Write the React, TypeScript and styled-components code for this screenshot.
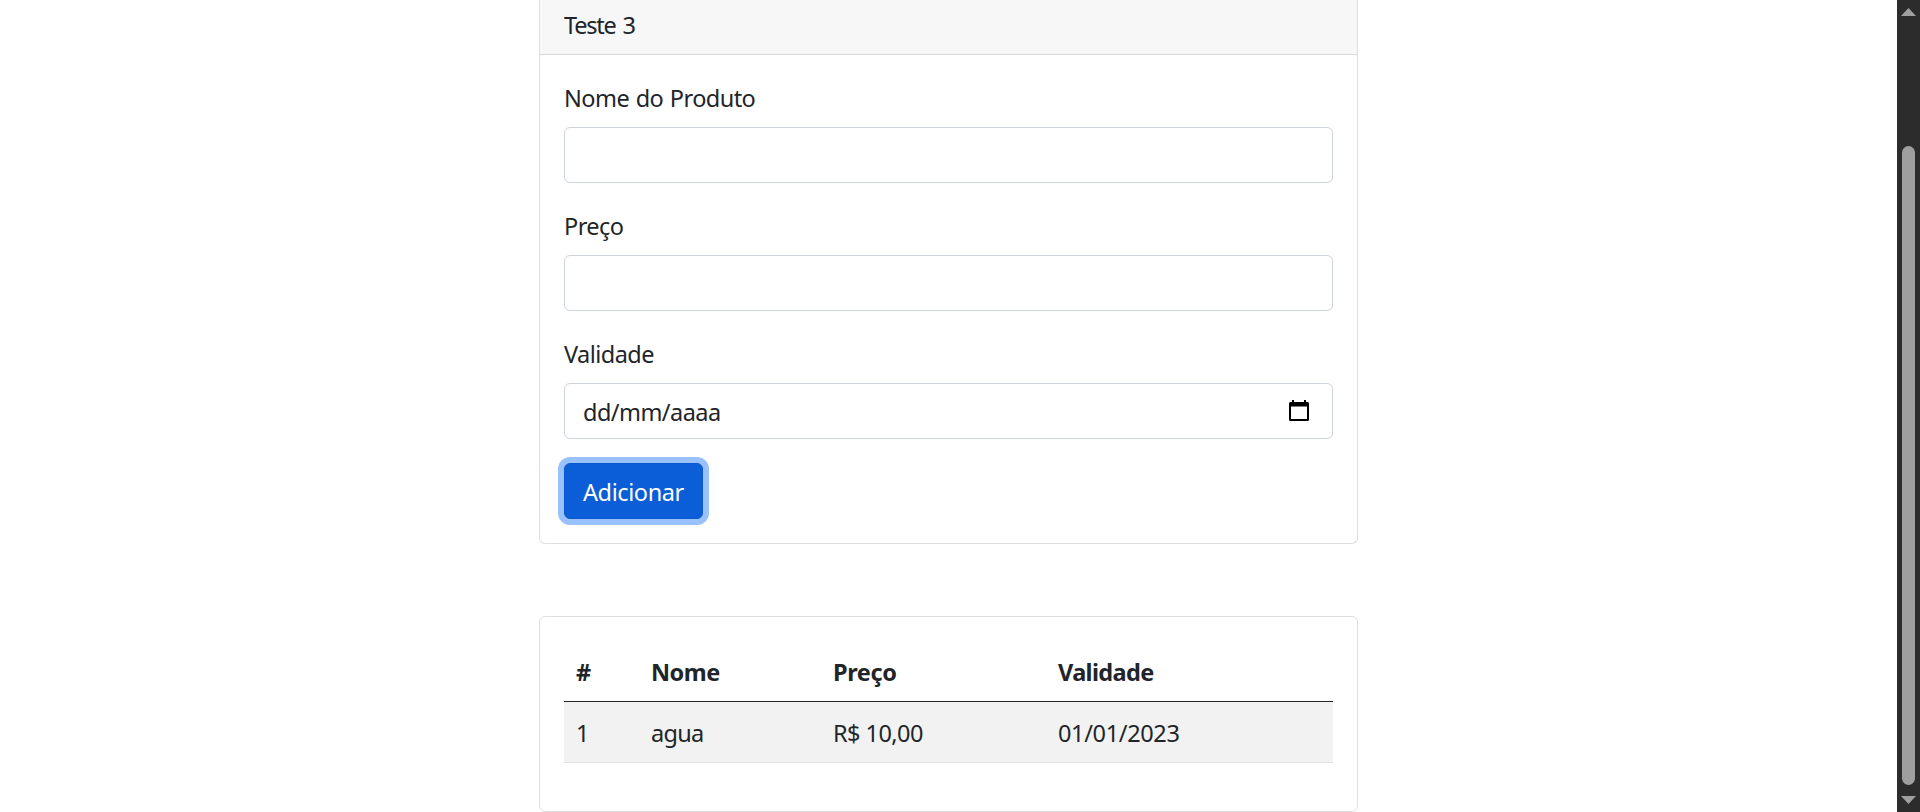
import React from 'react';
import styled, { createGlobalStyle } from 'styled-components';

const GlobalStyle = createGlobalStyle`
  *, *::before, *::after { box-sizing: border-box; }
  body {
    margin: 0;
    overflow: hidden;
    background: #fff;
    color: #212529;
    font: 400 23.5px/36px "Noto Sans", "Open Sans", sans-serif;
  }
`;

const Window = styled.div`
  display: flex;
  height: 812px;
`;

const Page = styled.main`
  flex: 1;
  display: flex;
  flex-direction: column;
  align-items: center;
  gap: 72px;
  overflow: hidden;
`;

const Card = styled.section<{ $cut?: boolean }>`
  width: 819px;
  border: 1px solid #dfdfdf;
  border-radius: ${(p) => (p.$cut ? '0 0 6px 6px' : '6px')};
  ${(p) => p.$cut && 'border-top: 0;'}
`;

const CardHeader = styled.header`
  padding: 7px 24px 11px;
  background: #f7f7f7;
  border-bottom: 1px solid #d8d8d8;
`;

const CardBody = styled.div`
  padding: 24px;
`;

const Field = styled.div`
  display: flex;
  flex-direction: column;
  margin-bottom: 24px;
`;

const Label = styled.label`
  padding-top: 1px;
  margin-bottom: 11px;
`;

const Input = styled.input`
  height: 56px;
  padding: 9px 18px;
  border: 1px solid #ced4da;
  border-radius: 6px;
  background: #fff;
  font: inherit;
  color: inherit;
`;

const DateBox = styled.div`
  display: flex;
  align-items: center;
  justify-content: space-between;
  height: 56px;
  padding: 1px 22px 0 18px;
  border: 1px solid #ced4da;
  border-radius: 6px;
`;

const CalendarIcon = styled.svg`
  display: block;
  width: 22px;
  height: 22px;
  margin-top: -2px;
`;

const Button = styled.button`
  display: block;
  width: 139px;
  height: 56px;
  padding: 2px 0 0 18px;
  border: 1px solid #0a58ca;
  border-radius: 6px;
  background: #0b5ed7;
  box-shadow: 0 0 0 6px #98c1fe;
  color: #fff;
  font: inherit;
  text-align: left;
`;

const Tight = styled.span<{ $by: number; $word?: number }>`
  letter-spacing: ${(p) => p.$by}px;
  word-spacing: ${(p) => p.$word ?? 0}px;
  white-space: nowrap;
`;

const Table = styled.table`
  width: 100%;
  table-layout: fixed;
  border-spacing: 0;
  margin-bottom: 24px;
`;

const HeadCell = styled.th<{ $width?: number }>`
  width: ${(p) => (p.$width ? `${p.$width}px` : 'auto')};
  padding: 13px 12px 11px;
  border-bottom: 1px solid #212529;
  text-align: left;
  font-weight: 700;
`;

const Cell = styled.td`
  padding: 13px 12px 11px;
  background: #f2f2f2;
  border-bottom: 1px solid #dee2e6;
`;

const Scrollbar = styled.aside`
  display: flex;
  flex-direction: column;
  align-items: center;
  width: 23px;
  padding: 8px 0;
  background: #2c2c2c;
`;

const Arrow = styled.svg`
  display: block;
  width: 15px;
  height: 8px;
  fill: #9f9f9f;
`;

const Thumb = styled.div`
  flex: 1;
  width: 13px;
  margin: 130px 0 11px;
  border-radius: 7px;
  background: #9f9f9f;
`;

const columns = [
  { title: '#', width: 75, tight: 0 },
  { title: 'Nome', width: 182, tight: -0.5 },
  { title: 'Preço', width: 225, tight: -0.4 },
  { title: 'Validade', tight: -0.65 },
];

const product = [
  { text: '1', tight: 0 },
  { text: 'agua', tight: -0.7 },
  { text: 'R$ 10,00', tight: -0.55 },
  { text: '01/01/2023', tight: -0.35 },
];

export default function App() {
  return (
    <>
      <GlobalStyle />
      <Window>
        <Page>
          <Card $cut>
            <CardHeader><Tight $by={-1.2} $word={2}>Teste 3</Tight></CardHeader>
            <CardBody>
              <Field>
                <Label htmlFor="nome"><Tight $by={-0.55} $word={1}>Nome do Produto</Tight></Label>
                <Input id="nome" />
              </Field>
              <Field>
                <Label htmlFor="preco"><Tight $by={-0.55}>Preço</Tight></Label>
                <Input id="preco" />
              </Field>
              <Field>
                <Label><Tight $by={-0.55}>Validade</Tight></Label>
                <DateBox>
                  <Tight $by={-0.55}>dd/mm/aaaa</Tight>
                  <CalendarIcon viewBox="0 0 22 22">
                    <path fill="#000" fillRule="evenodd" d="M4 0h2v2h10V0h2v2h1.5a1.5 1.5 0 0 1 1.5 1.5v16a1.5 1.5 0 0 1-1.5 1.5h-17A1.5 1.5 0 0 1 1 19.500v-16A1.500 1.500 0 0 1 2.500 2H4zM3 6.500V19h16V6.500z" />
                  </CalendarIcon>
                </DateBox>
              </Field>
              <Button type="button"><Tight $by={-0.4}>Adicionar</Tight></Button>
            </CardBody>
          </Card>
          <Card>
            <CardBody>
              <Table>
                <thead>
                  <tr>
                    {columns.map((c) => (
                      <HeadCell key={c.title} $width={c.width}><Tight $by={c.tight}>{c.title}</Tight></HeadCell>
                    ))}
                  </tr>
                </thead>
                <tbody>
                  <tr>
                    {product.map((c) => (
                      <Cell key={c.text}><Tight $by={c.tight}>{c.text}</Tight></Cell>
                    ))}
                  </tr>
                </tbody>
              </Table>
            </CardBody>
          </Card>
        </Page>
        <Scrollbar>
          <Arrow viewBox="0 0 15 8"><path d="M0 8 7.5 0 15 8z" /></Arrow>
          <Thumb />
          <Arrow viewBox="0 0 15 8"><path d="M0 0h15L7.5 8z" /></Arrow>
        </Scrollbar>
      </Window>
    </>
  );
}
